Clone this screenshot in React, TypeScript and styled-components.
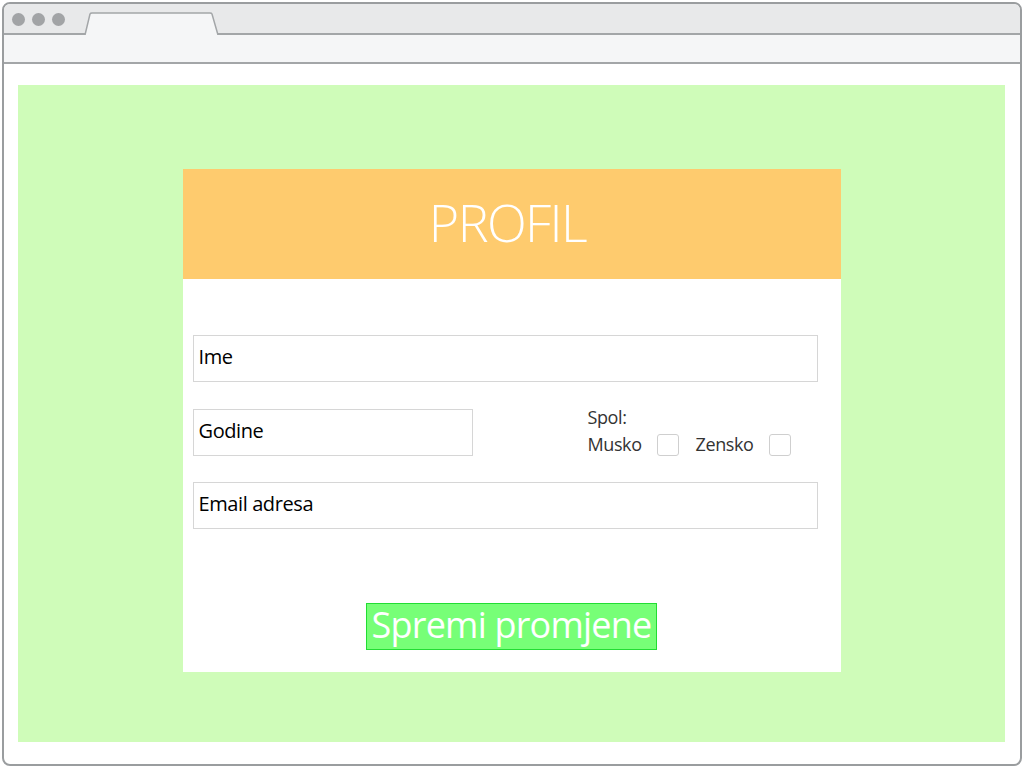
import React from 'react'
import styled, { createGlobalStyle } from 'styled-components'

const GlobalStyle = createGlobalStyle`
  html, body {
    margin: 0;
    padding: 0;
    background: #ffffff;
    font-family: "Open Sans", "Liberation Sans", sans-serif;
  }
`

const Frame = styled.div`
  box-sizing: border-box;
  margin: 2px;
  width: 1020px;
  height: 764px;
  border: 2px solid #9a9d9f;
  border-radius: 8px;
  overflow: hidden;
  display: flex;
  flex-direction: column;
  background: #ffffff;
`

const TitleBar = styled.div`
  height: 29px;
  background: #e8e9ea;
  border-bottom: 2px solid #a3a6a8;
  display: flex;
  align-items: flex-end;
  padding-left: 8px;
`

const Dots = styled.div`
  display: flex;
  gap: 7px;
  align-self: center;
  margin-top: 1px;
`

const Dot = styled.span`
  width: 13px;
  height: 13px;
  border-radius: 50%;
  background: #a2a4a6;
`

const Tab = styled.svg`
  margin-left: 19px;
  margin-bottom: -2px;
  display: block;
`

const AddressBar = styled.div`
  height: 27px;
  background: #f5f6f7;
  border-bottom: 2px solid #a3a6a8;
`

const Content = styled.div`
  flex: 1;
  padding: 21px 15px 22px 14px;
  display: flex;
`

const Canvas = styled.div`
  flex: 1;
  background: #cffcb9;
  display: flex;
  justify-content: center;
  align-items: flex-start;
  padding-top: 84px;
`

const Card = styled.div`
  width: 658px;
  background: #ffffff;
  display: flex;
  flex-direction: column;
`

const Header = styled.div`
  height: 110px;
  background: #fecb6e;
  color: #ffffff;
  font-size: 52px;
  font-weight: 300;
  letter-spacing: -1.6px;
  display: flex;
  align-items: center;
  justify-content: center;
  padding: 0 8px 6px 0;
  box-sizing: border-box;
`

const Body = styled.div`
  padding: 56px 23px 22px 10px;
  display: flex;
  flex-direction: column;
`

const Field = styled.div<{ $width?: number }>`
  box-sizing: border-box;
  height: 47px;
  width: ${(p) => (p.$width ? `${p.$width}px` : '100%')};
  border: 1px solid #d6d6d6;
  display: flex;
  align-items: center;
  padding-left: 5px;
  padding-bottom: 4px;
  font-size: 20px;
  color: #000000;
  letter-spacing: -0.4px;
`

const Row = styled.div`
  display: flex;
  align-items: flex-start;
  height: 47px;
  margin: 27px 0 26px 0;
`

const Gender = styled.div`
  margin-left: 115px;
  margin-top: -5px;
  color: #333333;
  font-size: 18px;
  letter-spacing: -0.4px;
  line-height: 27px;
`

const Options = styled.div`
  display: flex;
  align-items: center;
`

const Box = styled.span`
  box-sizing: border-box;
  width: 22px;
  height: 22px;
  border: 1px solid #cfcfcf;
  border-radius: 3px;
  margin-left: 15px;
  margin-right: 17px;
  margin-top: 1px;
`

const Actions = styled.div`
  display: flex;
  justify-content: center;
  margin-top: 74px;
  padding-left: 13px;
`

const SaveButton = styled.div`
  box-sizing: border-box;
  height: 47px;
  padding: 0 5px 4px 5px;
  background: #77ff77;
  border: 1px solid #22dd33;
  color: #ffffff;
  font-size: 36px;
  letter-spacing: -0.8px;
  display: flex;
  align-items: center;
`

export default function App() {
  return (
    <>
      <GlobalStyle />
      <Frame>
        <TitleBar>
          <Dots>
            <Dot />
            <Dot />
            <Dot />
          </Dots>
          <Tab width="136" height="23" viewBox="0 0 136 23">
            <path d="M1 23 L6 2 Q6.5 1 8 1 L126 1 Q127.5 1 128 2 L134 23" fill="#f5f6f7" stroke="#a3a6a8" strokeWidth="1.5" />
          </Tab>
        </TitleBar>
        <AddressBar />
        <Content>
          <Canvas>
            <Card>
              <Header>PROFIL</Header>
              <Body>
                <Field>Ime</Field>
                <Row>
                  <Field $width={280}>Godine</Field>
                  <Gender>
                    <div>Spol:</div>
                    <Options>
                      Musko
                      <Box />
                      Zensko
                      <Box />
                    </Options>
                  </Gender>
                </Row>
                <Field>Email adresa</Field>
                <Actions>
                  <SaveButton>Spremi promjene</SaveButton>
                </Actions>
              </Body>
            </Card>
          </Canvas>
        </Content>
      </Frame>
    </>
  )
}
